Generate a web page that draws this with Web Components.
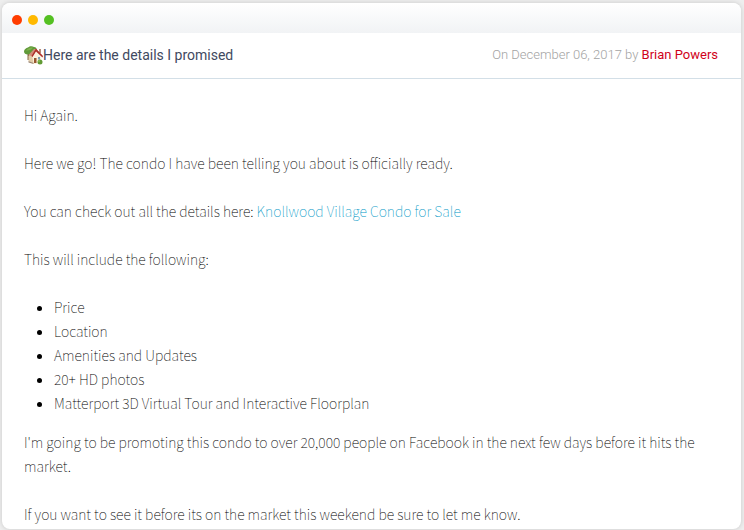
<!DOCTYPE html>
<html lang="en">
<head>
<meta charset="utf-8">
<meta name="viewport" content="width=device-width, initial-scale=1">
<title>Here are the details I promised</title>
<style>
  body {
    margin: 0;
    padding: 3px 3px 1px 2px;
    background: #eeeeee;
    font-family: "Noto Sans CJK SC", "Noto Sans", sans-serif;
    font-size: 14px;
    font-weight: 100;
    line-height: 24px;
    color: #000000;
  }

  a {
    color: #0098c6;
    text-decoration: none;
  }

  p {
    margin: 0 0 24px;
  }

  p:last-child {
    margin-bottom: 0;
  }

  ul {
    margin: 0 0 15px;
    padding-left: 30px;
  }
</style>
</head>
<body>
<mail-window>
  <mail-header slot="header" date="December 06, 2017" author="Brian Powers">
    <house-icon slot="icon"></house-icon>Here are the details I promised
  </mail-header>
  <p>Hi Again.</p>
  <p>Here we go! The condo I have been telling you about is officially ready.</p>
  <p>You can check out all the details here: <a href="#condo">Knollwood Village Condo for Sale</a></p>
  <p>This will include the following:</p>
  <ul>
    <li>Price</li>
    <li>Location</li>
    <li>Amenities and Updates</li>
    <li>20+ HD photos</li>
    <li>Matterport 3D Virtual Tour and Interactive Floorplan</li>
  </ul>
  <p>I'm going to be promoting this condo to over 20,000 people on Facebook in the next few days before it hits the market.</p>
  <p>If you want to see it before its on the market this weekend be sure to let me know.</p>
</mail-window>

<script>
/**
 * MailWindow web component
 * Window frame with a title bar, a header slot and the message body
 */
class MailWindow extends HTMLElement {
  constructor() {
    super();
    this.attachShadow({ mode: 'open' });
    this.shadowRoot.innerHTML = `
      <style>
        :host {
          display: block;
          background: #ffffff;
          border-radius: 8px;
          box-shadow: 0 0 5px rgba(0, 0, 0, 0.16);
          overflow: hidden;
        }

        .title-bar {
          display: flex;
          align-items: center;
          gap: 6px;
          height: 30px;
          padding: 4px 10px 0;
          box-sizing: border-box;
          background: linear-gradient(#ffffff, #f1f3f5);
        }

        .dot {
          width: 10px;
          height: 10px;
          border-radius: 50%;
        }

        .close { background: #ff3d00; }
        .minimize { background: #ffb900; }
        .maximize { background: #54c022; }

        .body {
          padding: 24px 22px 3px;
        }
      </style>

      <div class="title-bar">
        <span class="dot close"></span>
        <span class="dot minimize"></span>
        <span class="dot maximize"></span>
      </div>
      <slot name="header"></slot>
      <div class="body"><slot></slot></div>
    `;
  }
}

/**
 * MailHeader web component
 * Subject line on the left, date and author on the right
 */
class MailHeader extends HTMLElement {
  constructor() {
    super();
    this.attachShadow({ mode: 'open' });
  }

  connectedCallback() {
    this.render();
  }

  render() {
    this.shadowRoot.innerHTML = `
      <style>
        :host {
          display: flex;
          align-items: center;
          justify-content: space-between;
          gap: 16px;
          padding: 10px 23px 11px 22px;
          border-bottom: 1px solid #d3dfe7;
          font-family: Roboto, "Liberation Sans", sans-serif;
        }

        .subject {
          display: flex;
          align-items: center;
          margin: 0;
          font-size: 14px;
          font-weight: 400;
          color: #414960;
        }

        .meta {
          font-size: 13px;
          font-weight: 300;
          color: #a3a3a3;
        }

        a {
          font-weight: 400;
          color: #d0021b;
          text-decoration: none;
        }
      </style>

      <h1 class="subject"><slot name="icon"></slot><span><slot></slot></span></h1>
      <div class="meta">On ${this.getAttribute('date')} by <a href="#author">${this.getAttribute('author')}</a></div>
    `;
  }
}

/**
 * HouseIcon web component
 * House with a garden tree
 */
class HouseIcon extends HTMLElement {
  constructor() {
    super();
    this.attachShadow({ mode: 'open' });
    this.shadowRoot.innerHTML = `
      <style>
        :host {
          display: block;
        }

        svg {
          display: block;
          width: 19px;
          height: 19px;
        }
      </style>

      <svg viewBox="0 0 38 38" aria-hidden="true">
        <path d="M7 16h4v12H7z" fill="#8a6a45"/>
        <path d="M0 11C0 7 4 4 8 3 11 0 17 0 20 2c4 0 6 3 5 6-3 5-8 9-13 8-6 2-12 0-12-5z" fill="#619a3a"/>
        <path d="M4 9c4-5 9-6 14-6-3 4-8 7-14 6z" fill="#80b34e"/>
        <path d="M30 6h4v8h-4z" fill="#b88b78"/>
        <path d="M17 22l8-11 10 11v12l-15 2-3-1z" fill="#fbf1dc"/>
        <path d="M9 20l7-4 3 19-10-5z" fill="#e2cca8"/>
        <path d="M9 18L20 6h5l-8 15z" fill="#d18a78"/>
        <path d="M24 5l14 15-1 3-13-12-7 11-2-2z" fill="#ae2f28"/>
        <path d="M20 24h5v10h-5z" fill="#96562f"/>
        <path d="M28 22h4v5h-4z" fill="#7d9db0"/>
        <path d="M9 30l10 4v2l-10-3z" fill="#9a8571"/>
        <circle cx="32" cy="32" r="5" fill="#619b35"/>
        <circle cx="30" cy="30" r="2" fill="#8bbb50"/>
      </svg>
    `;
  }
}

// Register the custom elements
customElements.define('mail-window', MailWindow);
customElements.define('mail-header', MailHeader);
customElements.define('house-icon', HouseIcon);
</script>
</body>
</html>
